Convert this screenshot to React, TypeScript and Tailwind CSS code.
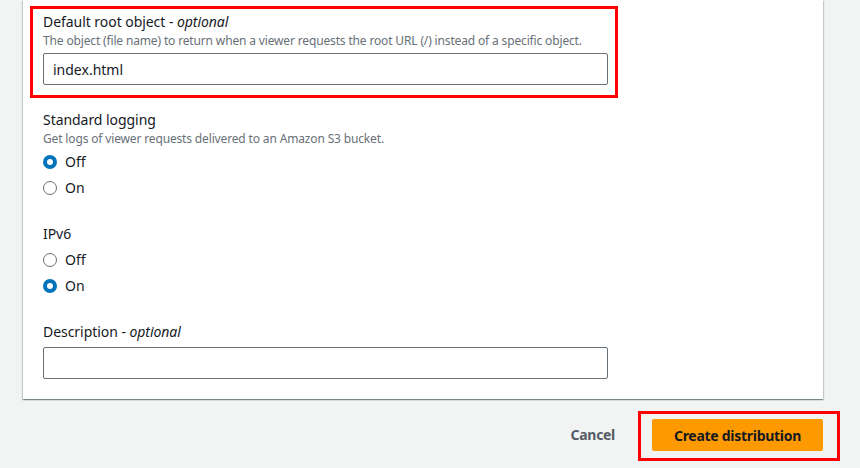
import React from "react";

function Radio({ checked, label }: { checked: boolean; label: string }) {
  return (
    <div className="flex h-[22px] items-center gap-2">
      {checked ? (
        <span className="box-border block h-[14px] w-[14px] rounded-full border-[4px] border-[#0073bb] bg-white" />
      ) : (
        <span className="box-border block h-[14px] w-[14px] rounded-full border-[1.5px] border-[#687078] bg-white" />
      )}
      <span className="text-[14px] leading-[22px] text-[#16191f]">{label}</span>
    </div>
  );
}

function Label({ text, optional }: { text: string; optional?: boolean }) {
  return (
    <div className="text-[14px] leading-[22px] tracking-[-0.05px] text-[#16191f]">
      {text}
      {optional && (
        <>
          {" - "}
          <i>optional</i>
        </>
      )}
    </div>
  );
}

function Desc({ text }: { text: string }) {
  return <div className="text-[12px] leading-[16px] tracking-[-0.15px] text-[#687078]">{text}</div>;
}

export default function App() {
  return (
    <div
      className="h-[468px] w-[860px] overflow-hidden bg-[#f2f3f3] pl-[23px] pr-[37px]"
      style={{ fontFamily: '"Noto Sans", sans-serif' }}
    >
      <div className="flex flex-col gap-6 bg-white px-5 pb-5 pt-[11px] shadow-[0_1px_1px_0_rgba(0,28,36,0.3),1px_1px_1px_0_rgba(0,28,36,0.15),-1px_1px_1px_0_rgba(0,28,36,0.15)]">
        <div className="relative">
          <div className="pointer-events-none absolute left-[-13px] top-[-5px] h-[92px] w-[588px] border-[3px] border-[#ff0000]" />
          <Label text="Default root object" optional />
          <Desc text="The object (file name) to return when a viewer requests the root URL (/) instead of a specific object." />
          <div className="mt-1 flex h-[32px] w-[565px] items-center rounded-[2px] border border-[#687078] px-[9px] text-[14px] text-[#16191f]">
            index.html
          </div>
        </div>

        <div>
          <Label text="Standard logging" />
          <Desc text="Get logs of viewer requests delivered to an Amazon S3 bucket." />
          <div className="mt-1 flex flex-col gap-1">
            <Radio checked label="Off" />
            <Radio checked={false} label="On" />
          </div>
        </div>

        <div>
          <Label text="IPv6" />
          <div className="mt-1 flex flex-col gap-1">
            <Radio checked={false} label="Off" />
            <Radio checked label="On" />
          </div>
        </div>

        <div>
          <Label text="Description" optional />
          <div className="mt-1 h-[32px] w-[565px] rounded-[2px] border border-[#687078]" />
        </div>
      </div>

      <div className="mt-5 flex items-center justify-end">
        <button className="mr-[17px] px-5 text-[14px] font-bold leading-[22px] tracking-[-0.3px] text-[#545b64]">Cancel</button>
        <div className="relative">
          <div className="pointer-events-none absolute left-[-14px] top-[-8px] h-[50px] w-[202px] border-[3px] border-[#ff0000]" />
          <button className="h-[32px] w-[171px] rounded-[2px] bg-[#ff9900] text-[14px] font-bold tracking-[-0.28px] text-[#16191f]">
            Create distribution
          </button>
        </div>
      </div>
    </div>
  );
}
